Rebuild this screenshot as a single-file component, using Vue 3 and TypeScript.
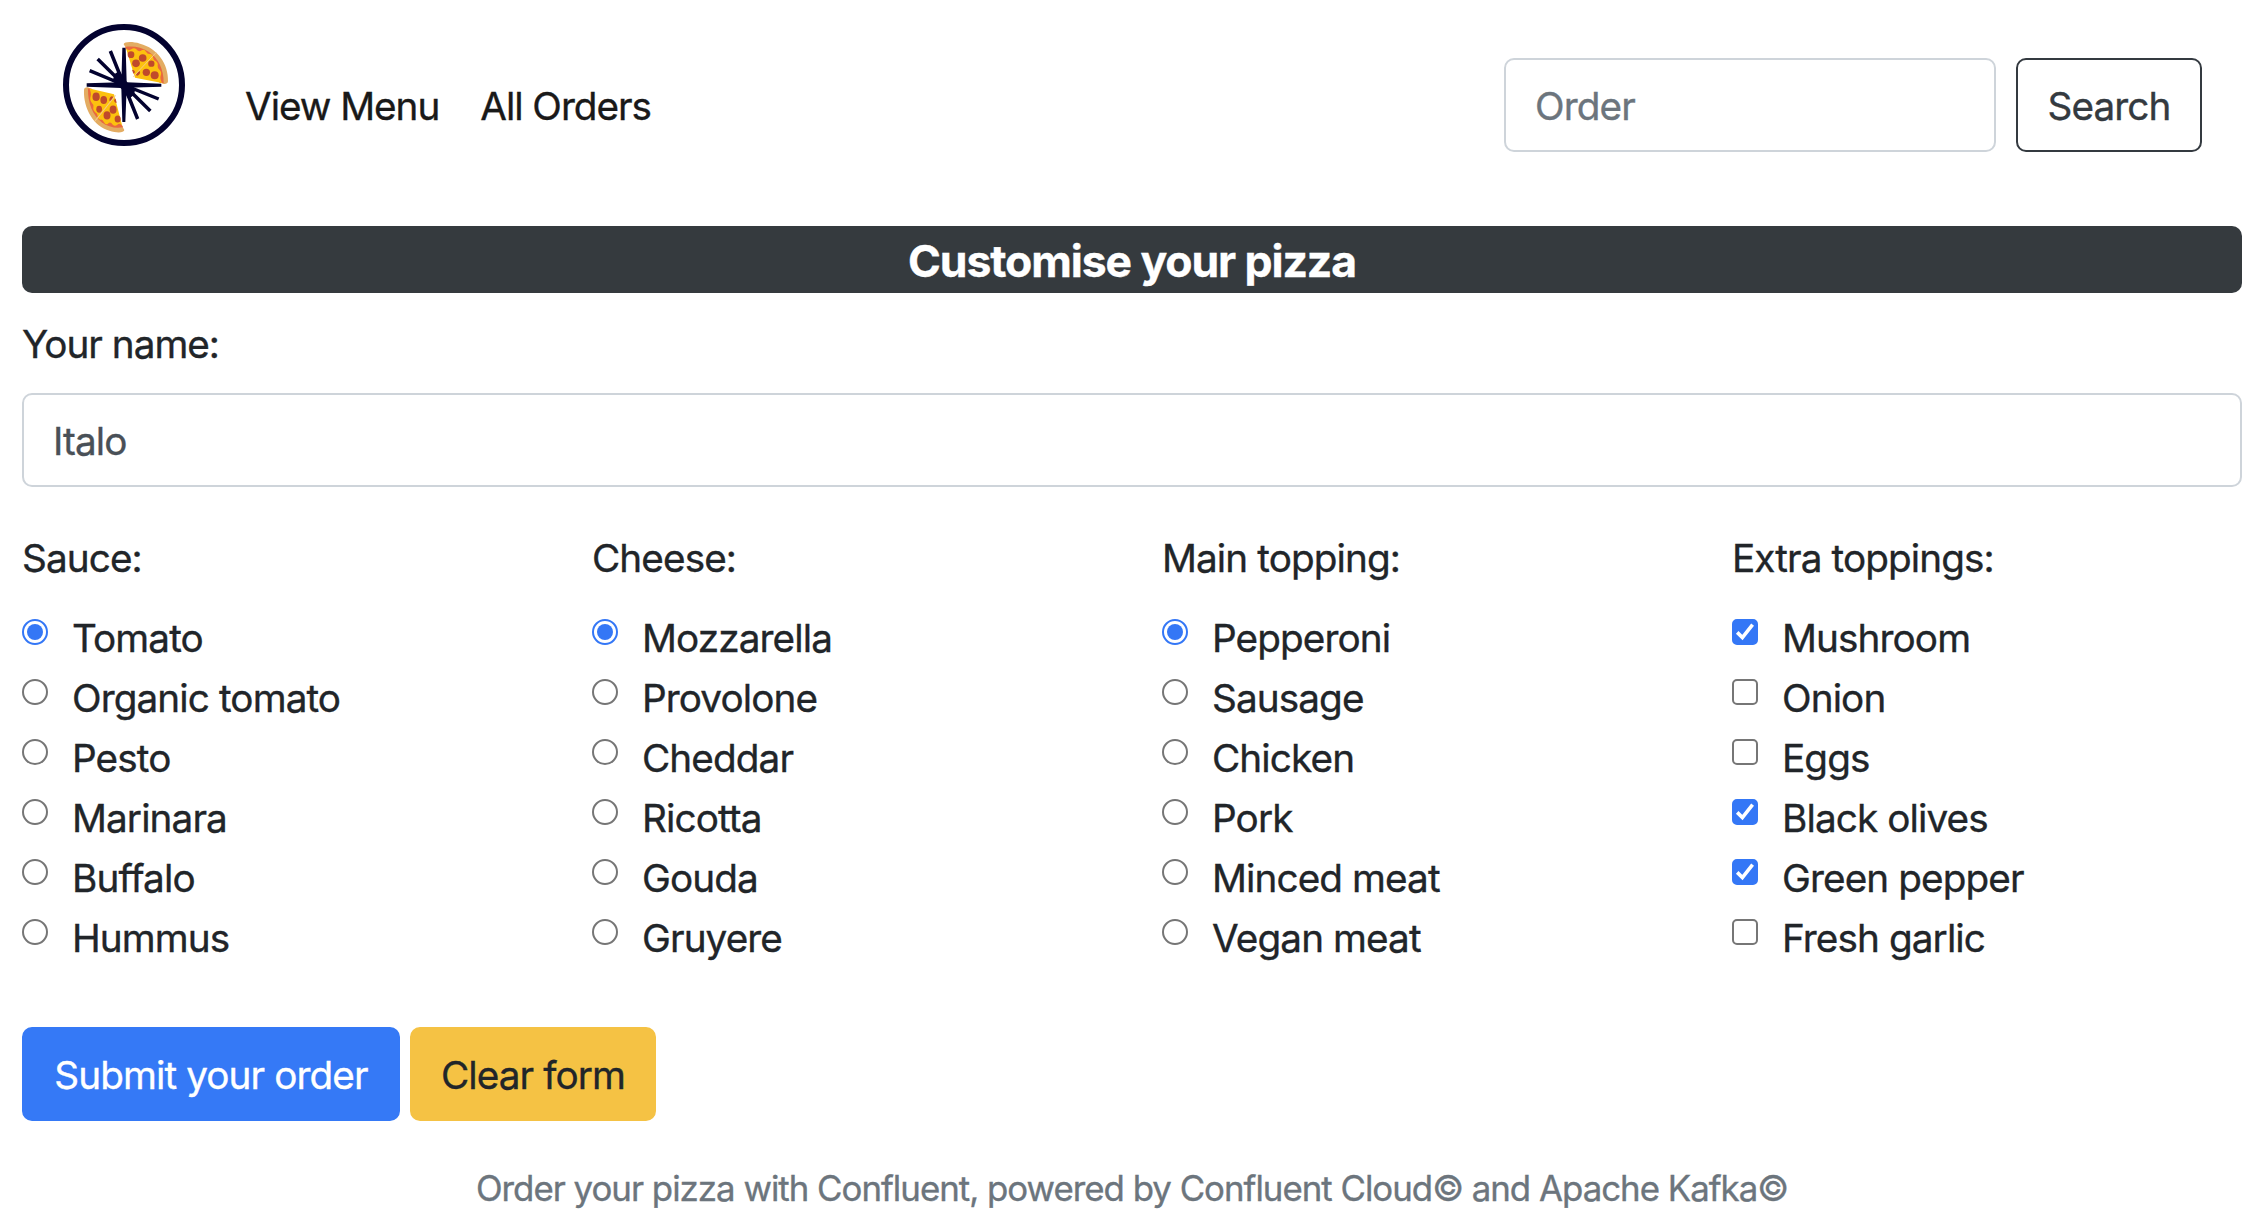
<script setup lang="ts">
import { reactive, ref } from 'vue'

interface Group {
  title: string
  name: string
  type: 'radio' | 'checkbox'
  options: string[]
}

const groups: Group[] = [
  { title: 'Sauce:', name: 'sauce', type: 'radio', options: ['Tomato', 'Organic tomato', 'Pesto', 'Marinara', 'Buffalo', 'Hummus'] },
  { title: 'Cheese:', name: 'cheese', type: 'radio', options: ['Mozzarella', 'Provolone', 'Cheddar', 'Ricotta', 'Gouda', 'Gruyere'] },
  { title: 'Main topping:', name: 'main', type: 'radio', options: ['Pepperoni', 'Sausage', 'Chicken', 'Pork', 'Minced meat', 'Vegan meat'] },
  { title: 'Extra toppings:', name: 'extra', type: 'checkbox', options: ['Mushroom', 'Onion', 'Eggs', 'Black olives', 'Green pepper', 'Fresh garlic'] },
]

const customer = ref('Italo')
const search = ref('')
const chosen = reactive<Record<string, string[]>>({
  sauce: ['Tomato'],
  cheese: ['Mozzarella'],
  main: ['Pepperoni'],
  extra: ['Mushroom', 'Black olives', 'Green pepper'],
})

function pick(group: Group, option: string) {
  if (group.type === 'radio') {
    chosen[group.name] = [option]
    return
  }
  const list = chosen[group.name]
  chosen[group.name] = list.includes(option) ? list.filter((o) => o !== option) : [...list, option]
}

function clearForm() {
  customer.value = ''
  for (const g of groups) chosen[g.name] = []
}
</script>

<template>
  <div class="page">
    <header class="navbar">
      <svg class="logo" viewBox="39 42 366 366">
        <defs>
          <g id="slice">
            <path d="M221 103C222 95 246 94 270 101C322 114 356 162 354 214C354 224 338 224 334 218L228 114Z" fill="#e3ac62" />
            <path d="M225 111C250 107 275 112 296 125C326 145 341 178 341 219L330 219L228 116Z" fill="#e9683f" />
            <path d="M228 115Q236 124 244 118Q252 112 259 118Q267 128 275 121Q283 116 288 125Q293 134 300 132Q308 133 309 142Q309 150 317 153Q325 158 323 167Q322 175 329 180Q336 187 332 197Q329 206 336 219L255 203Z" fill="#fcc10f" />
            <g fill="#c04a2b">
              <circle cx="243" cy="134" r="10" />
              <circle cx="278" cy="144" r="11.5" />
              <circle cx="258" cy="160" r="11.5" />
              <circle cx="304" cy="161" r="9.5" />
              <circle cx="289" cy="187" r="11" />
              <circle cx="314" cy="196" r="12" />
              <path d="M246 179Q254 179 255 187L250 191ZM258 196Q260 185 270 184Q272 193 263 197Z" />
            </g>
            <path d="M318 128L250 200" stroke="#f7c98a" stroke-width="3" />
          </g>
        </defs>
        <circle cx="222" cy="225" r="174" fill="#fff" stroke="#03022f" stroke-width="18" />
        <g stroke="#03022f" stroke-width="10.5">
          <path d="M181 123L222 225L263 327M143 147L222 225L301 303M119 182L222 225L326 267" />
        </g>
        <g fill="#03022f">
          <path d="M217 113H227L230 217L334 221V230L230 233L226 336H217L214 234L110 230V220L214 217Z" />
          <path d="M188 212L194 192L208 182L222 205L234 220L256 236L252 254L236 268L222 244Z" />
        </g>
        <use href="#slice" />
        <use href="#slice" transform="matrix(-.91 0 0 -1.078 424.1 471.4)" />
      </svg>
      <nav class="links">
        <a>View Menu</a>
        <a>All Orders</a>
      </nav>
      <form class="search" @submit.prevent>
        <input v-model="search" class="control" placeholder="Order" />
        <button class="btn outline">Search</button>
      </form>
    </header>

    <h1 class="banner"><span>Customise your pizza</span></h1>

    <form @submit.prevent>
      <label class="name-label" for="customer">Your name:</label>
      <input id="customer" v-model="customer" class="control name-input" />

      <div class="groups">
        <section v-for="g in groups" :key="g.name" class="group">
          <div class="title">{{ g.title }}</div>
          <label v-for="o in g.options" :key="o" class="option">
            <span class="mark">
              <input :type="g.type" :name="g.name" :checked="chosen[g.name].includes(o)" @change="pick(g, o)" />
              <svg v-if="g.type === 'checkbox' && chosen[g.name].includes(o)" viewBox="0 0 26 26">
                <path d="M5.2 13.4L10.4 18.5L20.6 5.6" fill="none" stroke="#fff" stroke-width="3.6" />
              </svg>
            </span>
            <span>{{ o }}</span>
          </label>
        </section>
      </div>

      <div class="actions">
        <button class="btn primary">Submit your order</button>
        <button class="btn warning" type="button" @click="clearForm">Clear form</button>
      </div>
    </form>

    <footer>Order your pizza with Confluent, powered by Confluent Cloud© and Apache Kafka©</footer>
  </div>
</template>

<style>
body {
  margin: 0;
  background: #fff;
}
</style>

<style scoped>
* {
  box-sizing: border-box;
}
.page {
  width: 2268px;
  height: 1230px;
  overflow: hidden;
  padding: 0 26px 0 22px;
  font-family: Inter, "Liberation Sans", sans-serif;
  font-size: 38.7px;
  line-height: 60px;
  letter-spacing: -0.9px;
  -webkit-text-stroke: 0.35px;
  color: #212529;
}
.navbar {
  display: flex;
  height: 226px;
  padding: 24px 40px 0 41px;
}
.logo {
  width: 122px;
  height: 122px;
}
.links {
  display: flex;
  gap: 41px;
  margin: 52px 0 0 60px;
  letter-spacing: -1.05px;
  color: #191919;
}
.links a {
  height: 60px;
  white-space: nowrap;
}
.search {
  display: flex;
  gap: 20px;
  margin: 34px 0 0 auto;
}
.control,
.btn {
  height: 94px;
  padding: 2px 29px 0;
  border: 2px solid #ced4da;
  border-radius: 10px;
  font: inherit;
  letter-spacing: inherit;
  outline: none;
  background: #fff;
}
.control {
  color: #495057;
}
.control::placeholder {
  color: #6c757d;
  opacity: 1;
}
.search .control {
  width: 492px;
}
.btn.outline {
  width: 186px;
  padding: 2px 0 0;
  border-color: #343a40;
  color: #343a40;
}
.banner {
  height: 67px;
  margin: 0;
  border-radius: 10px;
  background: #353a3e;
  color: #fff;
  font-size: 44.5px;
  font-weight: 700;
  line-height: 70px;
  letter-spacing: -1.1px;
  text-align: center;
}
.name-label {
  display: block;
  height: 60px;
  margin-top: 21px;
  letter-spacing: -1px;
}
.name-input {
  display: block;
  width: 100%;
  margin-top: 19px;
}
.groups {
  display: grid;
  grid-template-columns: repeat(4, 570px);
  margin-top: 41px;
}
.title {
  margin-bottom: 20px;
}
.option {
  display: flex;
  height: 60px;
}
.mark {
  display: grid;
  width: 26px;
  height: 26px;
  margin: 11px 24px 0 0;
}
.mark > * {
  grid-area: 1 / 1;
  width: 26px;
  height: 26px;
}
.mark input {
  appearance: none;
  margin: 0;
  border: 2px solid #767676;
  border-radius: 5px;
}
.mark input[type='radio'] {
  padding: 3px;
  border-radius: 50%;
}
.mark input:checked {
  border-color: #3477f6;
  background: #3477f6;
}
.mark input[type='radio']:checked {
  background-clip: content-box;
}
.actions {
  display: flex;
  gap: 10px;
  margin-top: 59px;
}
.btn.primary {
  width: 378px;
  padding: 2px 0 0;
  border-color: #3579f6;
  background: #3579f6;
  color: #fff;
}
.btn.warning {
  width: 246px;
  padding: 2px 0 0;
  border-color: #f5c244;
  background: #f5c244;
  color: #212529;
}
footer {
  margin-top: 37px;
  font-size: 34.8px;
  letter-spacing: -0.99px;
  color: #6c757d;
  text-align: center;
  white-space: nowrap;
}
</style>
